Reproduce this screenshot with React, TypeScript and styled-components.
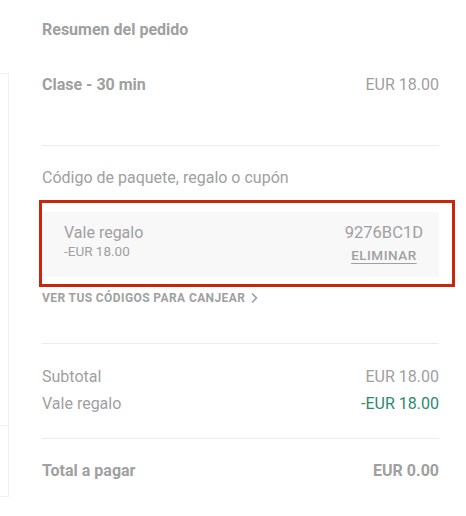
import { FC } from 'react';
import styled, { createGlobalStyle } from 'styled-components';

const GlobalStyle = createGlobalStyle`
  html, body {
    margin: 0;
    padding: 0;
    background: #ffffff;
    font-family: Roboto, 'Liberation Sans', sans-serif;
    color: #a0a0a0;
  }
`;

const Page = styled.div`
  display: flex;
  width: 466px;
  height: 516px;
  overflow: hidden;
`;

const LeftRail = styled.div`
  width: 9px;
  padding-top: 74px;
  display: flex;
  flex-direction: column;
`;

const RailCard = styled.div<{ $h: number }>`
  height: ${(p) => p.$h}px;
  border-right: 1px solid #f0f0f0;
  border-bottom: 1px solid #f0f0f0;
  border-top: 1px solid #f0f0f0;
  margin-top: -1px;
`;

const Summary = styled.div`
  margin-left: 33px;
  width: 397px;
  padding-top: 20px;
  display: flex;
  flex-direction: column;
`;

const Title = styled.div`
  font-size: 16px;
  line-height: 20px;
  font-weight: 700;
`;

const Row = styled.div<{ $mt?: number; $bold?: boolean }>`
  display: flex;
  justify-content: space-between;
  align-items: center;
  font-size: 16px;
  line-height: 20px;
  margin-top: ${(p) => p.$mt ?? 0}px;
  .label {
    font-weight: ${(p) => (p.$bold ? 700 : 400)};
  }
  .value {
    font-weight: ${(p) => (p.$bold ? 700 : 400)};
  }
  .value.plain {
    font-weight: 400;
  }
  .value.discount {
    color: #2c8a6c;
  }
`;

const Divider = styled.hr<{ $mt: number }>`
  margin: ${(p) => p.$mt}px 0 0;
  border: none;
  border-top: 1px solid #ececec;
  width: 100%;
`;

const SectionLabel = styled.div`
  margin-top: 22px;
  font-size: 16px;
  line-height: 20px;
`;

const CouponWrap = styled.div`
  position: relative;
  margin-top: 24px;
`;

const Coupon = styled.div`
  display: flex;
  justify-content: space-between;
  align-items: flex-start;
  height: 65px;
  box-sizing: border-box;
  padding: 11px 16px 0 22px;
  background: #f8f8f8;
`;

const CouponInfo = styled.div`
  display: flex;
  flex-direction: column;
  .name {
    font-size: 16px;
    line-height: 20px;
  }
  .amount {
    font-size: 13.5px;
    line-height: 16px;
  }
`;

const CouponCode = styled.div`
  display: flex;
  flex-direction: column;
  align-items: center;
  .code {
    font-size: 16.5px;
    line-height: 20px;
  }
`;

const RemoveLink = styled.a`
  margin-top: 4px;
  font-size: 13.5px;
  line-height: 16px;
  font-weight: 500;
  letter-spacing: 0.5px;
  color: #a0a0a0;
  text-decoration: underline;
  text-underline-offset: 3px;
  cursor: pointer;
`;

const Highlight = styled.div`
  position: absolute;
  left: -3px;
  right: -16px;
  top: -12px;
  bottom: -10px;
  border: 3px solid #c8270e;
  pointer-events: none;
`;

const CodesLink = styled.a`
  margin-top: 13px;
  display: flex;
  align-items: center;
  gap: 5px;
  font-size: 12px;
  line-height: 16px;
  font-weight: 700;
  letter-spacing: 0.4px;
  text-transform: uppercase;
  color: #a0a0a0;
  cursor: pointer;
`;

const Totals = styled.div`
  margin-top: 23px;
  display: flex;
  flex-direction: column;
  gap: 7px;
`;

const Chevron: FC = () => (
  <svg width="9" height="12" viewBox="0 0 9 12" fill="none">
    <path d="M2 1.5 L6.5 6 L2 10.5" stroke="#a0a0a0" strokeWidth="1.6" />
  </svg>
);

const App: FC = () => {
  return (
    <Page>
      <GlobalStyle />
      <LeftRail>
        <RailCard $h={351} />
        <RailCard $h={70} />
      </LeftRail>
      <Summary>
        <Title>Resumen del pedido</Title>
        <Row $mt={35} $bold>
          <span className="label">Clase - 30 min</span>
          <span className="value plain">EUR 18.00</span>
        </Row>
        <Divider $mt={50} />
        <SectionLabel>Código de paquete, regalo o cupón</SectionLabel>
        <CouponWrap>
          <Coupon>
            <CouponInfo>
              <span className="name">Vale regalo</span>
              <span className="amount">-EUR 18.00</span>
            </CouponInfo>
            <CouponCode>
              <span className="code">9276BC1D</span>
              <RemoveLink>ELIMINAR</RemoveLink>
            </CouponCode>
          </Coupon>
          <Highlight />
        </CouponWrap>
        <CodesLink>
          Ver tus códigos para canjear
          <Chevron />
        </CodesLink>
        <Divider $mt={37} />
        <Totals>
          <Row>
            <span className="label">Subtotal</span>
            <span className="value">EUR 18.00</span>
          </Row>
          <Row>
            <span className="label">Vale regalo</span>
            <span className="value discount">-EUR 18.00</span>
          </Row>
        </Totals>
        <Divider $mt={24} />
        <Row $mt={22} $bold>
          <span className="label">Total a pagar</span>
          <span className="value">EUR 0.00</span>
        </Row>
      </Summary>
    </Page>
  );
};

export default App;
